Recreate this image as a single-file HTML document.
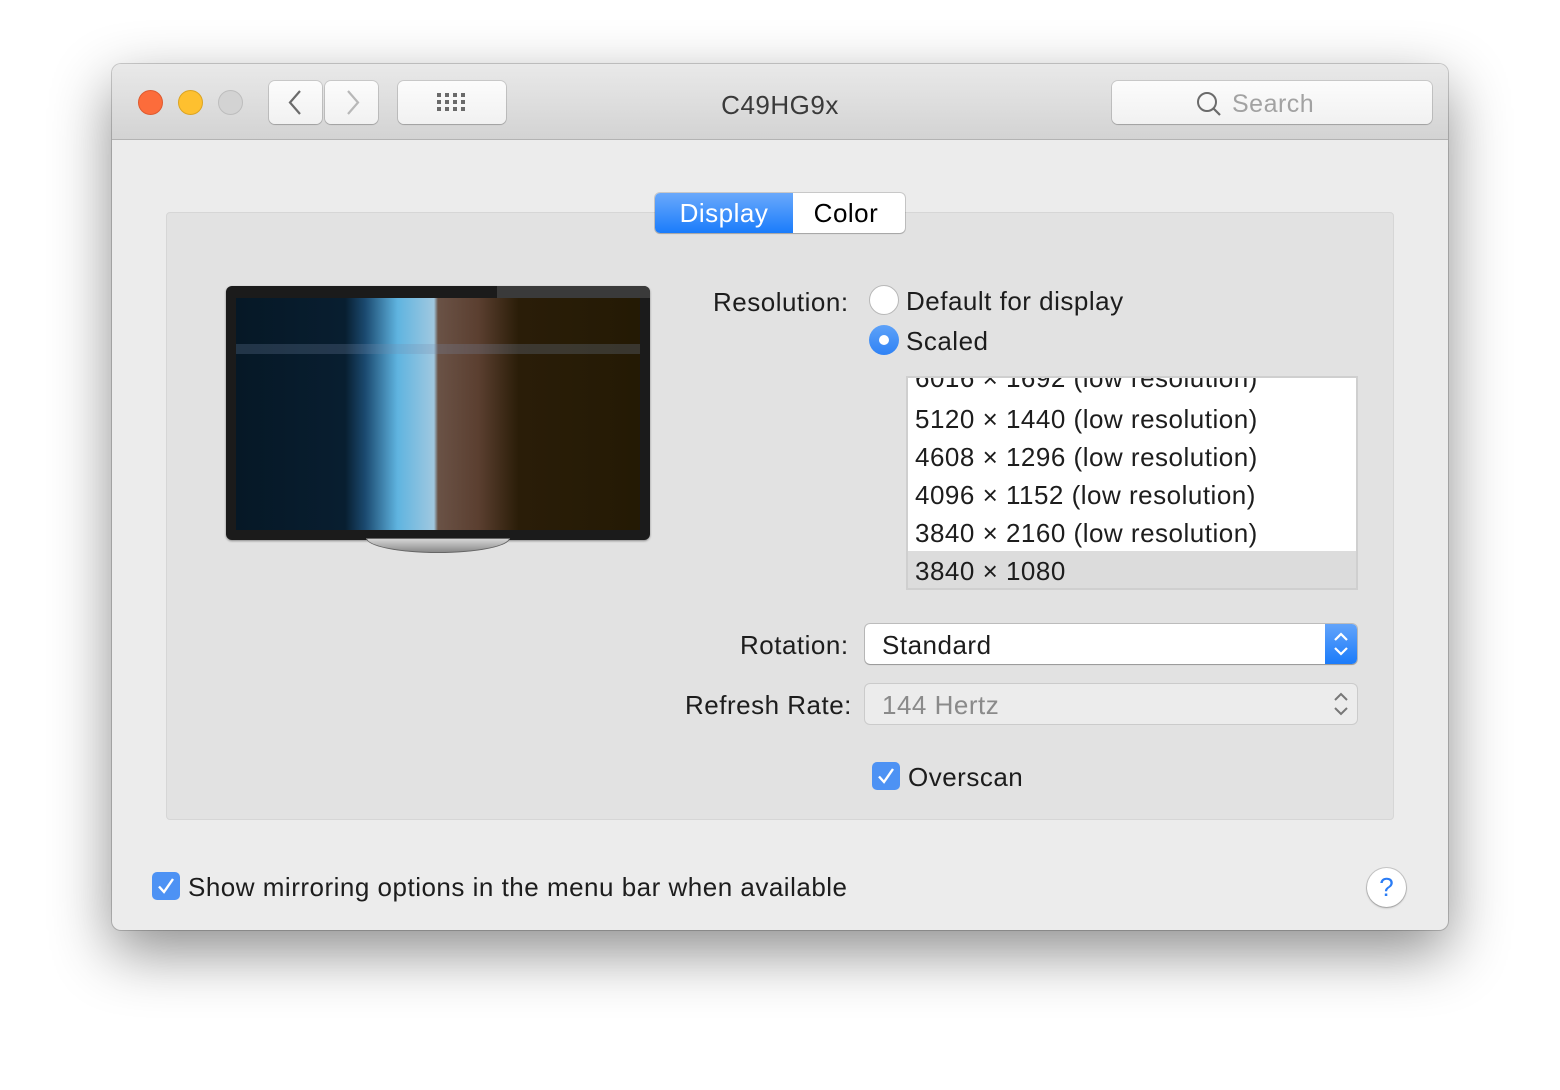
<!DOCTYPE html>
<html><head><meta charset="utf-8"><style>
*{box-sizing:border-box;margin:0;padding:0}
body{width:1560px;height:1090px;background:#fff;position:relative;overflow:hidden;font-family:"Liberation Sans",sans-serif;color:#1d1d1d}
.abs{position:absolute}
.win{left:112px;top:64px;width:1336px;height:866px;border-radius:9px;background:#ececec;box-shadow:0 22px 60px rgba(0,0,0,.45),0 0 0 1px rgba(0,0,0,.18);overflow:hidden}
.title{left:0;top:0;width:1336px;height:76px;background:linear-gradient(#e9e9e9,#d3d3d3);border-bottom:1px solid #b3b3b3}
.dot{width:25px;height:25px;border-radius:50%;top:26px}
.btn{background:linear-gradient(#fcfcfc,#f1f1f1);border-radius:6px;box-shadow:0 0 0 1px rgba(0,0,0,.12),0 1px 1px rgba(0,0,0,.15)}
.t{font-size:26px;white-space:nowrap;line-height:1;letter-spacing:0.5px}
</style></head><body>
<div class="abs win">
 <div class="abs title">
  <div class="abs dot" style="left:26px;background:#fc6c3b;border:1px solid #de5a2f"></div>
  <div class="abs dot" style="left:66px;background:#fec02f;border:1px solid #dca422"></div>
  <div class="abs dot" style="left:106px;background:#d3d3d3;border:1px solid #bdbdbd"></div>
  <div class="abs btn" style="left:157px;top:17px;width:53px;height:43px"></div>
  <div class="abs btn" style="left:213px;top:17px;width:53px;height:43px"></div>
  <svg class="abs" style="left:157px;top:17px" width="110" height="43"><path d="M31 10 L21 21.5 L31 33" stroke="#6b6b6b" stroke-width="2.2" fill="none"/><path d="M79 10 L89 21.5 L79 33" stroke="#b8b8b8" stroke-width="2.2" fill="none"/></svg>
  <div class="abs btn" style="left:286px;top:17px;width:108px;height:43px"></div>
  <svg class="abs" style="left:325px;top:29px" width="30" height="20"><g fill="#6a6a6a">
   <rect x="0" y="0" width="4" height="4"/><rect x="8" y="0" width="4" height="4"/><rect x="16" y="0" width="4" height="4"/><rect x="24" y="0" width="4" height="4"/>
   <rect x="0" y="7" width="4" height="4"/><rect x="8" y="7" width="4" height="4"/><rect x="16" y="7" width="4" height="4"/><rect x="24" y="7" width="4" height="4"/>
   <rect x="0" y="14" width="4" height="4"/><rect x="8" y="14" width="4" height="4"/><rect x="16" y="14" width="4" height="4"/><rect x="24" y="14" width="4" height="4"/></g></svg>
  <div class="abs t" style="left:0;width:1336px;text-align:center;top:28px;color:#3a3a3a;font-size:26px">C49HG9x</div>
  <div class="abs btn" style="left:1000px;top:17px;width:320px;height:43px"></div>
  <svg class="abs" style="left:1084px;top:27px" width="28" height="28"><circle cx="11" cy="11" r="9" stroke="#6b6b6b" stroke-width="2" fill="none"/><path d="M17.5 17.5 L24 24" stroke="#6b6b6b" stroke-width="2.2"/></svg>
  <div class="abs t" style="left:1120px;top:28px;color:#a2a2a2;font-size:25px">Search</div>
 </div>
 <div class="abs" style="left:54px;top:148px;width:1228px;height:608px;background:#e2e2e2;border:1px solid #d6d6d6;border-radius:4px"></div>
 <div class="abs" style="left:543px;top:129px;width:250px;height:40px;border-radius:5px;background:#fff;box-shadow:0 0 0 1px rgba(0,0,0,.15),0 1px 1px rgba(0,0,0,.15);overflow:hidden">
  <div class="abs" style="left:0;top:0;width:138px;height:40px;background:linear-gradient(#6aa9fb,#1a7cfb)"></div>
  <div class="abs t" style="left:0;width:138px;text-align:center;top:7px;color:#fff">Display</div>
  <div class="abs t" style="left:138px;width:106px;text-align:center;top:7px;color:#000">Color</div>
 </div>
 <!-- monitor -->
 <div class="abs" style="left:114px;top:222px;width:424px;height:254px;background:#1b1b1b;border-radius:6px;box-shadow:0 1px 2px rgba(0,0,0,.4)"></div>
 <div class="abs" style="left:385px;top:222px;width:153px;height:12px;background:#3a3a3a;border-top-right-radius:6px"></div>
 <div class="abs" style="left:124px;top:234px;width:404px;height:232px;background:linear-gradient(90deg,#061826 0%,#081e30 27%,#1b4a70 32%,#5fb4e0 40%,#a0c8e0 49%,#6a5246 50%,#5b3f30 60%,#2a1d08 70%,#241a04 100%)"></div>
 <div class="abs" style="left:124px;top:280px;width:404px;height:10px;background:rgba(120,140,170,.25)"></div>
 <div class="abs" style="left:254px;top:474px;width:144px;height:15px;border-radius:0 0 72px 72px/0 0 15px 15px;background:linear-gradient(#d5d5d5,#8a8a8a);border:1px solid #666"></div>
 <!-- labels -->
 <div class="abs t" style="left:601px;top:225px">Resolution:</div>
 <div class="abs" style="left:757px;top:221px;width:30px;height:30px;border-radius:50%;background:#fff;border:1px solid #b8b8b8"></div>
 <div class="abs t" style="left:794px;top:224px">Default for display</div>
 <div class="abs" style="left:757px;top:261px;width:30px;height:30px;border-radius:50%;background:linear-gradient(#5ea2f8,#2f82f5)"></div>
 <div class="abs" style="left:767px;top:271px;width:10px;height:10px;border-radius:50%;background:#fff"></div>
 <div class="abs t" style="left:794px;top:264px">Scaled</div>
 <div class="abs" style="left:794px;top:312px;width:452px;height:214px;background:#fff;border:2px solid #cfcfcf;overflow:hidden">
  <div class="abs t" style="left:7px;top:-13px">6016 × 1692 (low resolution)</div>
  <div class="abs t" style="left:7px;top:28px">5120 × 1440 (low resolution)</div>
  <div class="abs t" style="left:7px;top:66px">4608 × 1296 (low resolution)</div>
  <div class="abs t" style="left:7px;top:104px">4096 × 1152 (low resolution)</div>
  <div class="abs t" style="left:7px;top:142px">3840 × 2160 (low resolution)</div>
  <div class="abs" style="left:0;top:173px;width:450px;height:38px;background:#dcdcdc"></div>
  <div class="abs t" style="left:7px;top:180px">3840 × 1080</div>
 </div>
 <div class="abs t" style="left:628px;top:568px">Rotation:</div>
 <div class="abs" style="left:753px;top:560px;width:492px;height:40px;border-radius:5px;background:#fff;box-shadow:0 0 0 1px rgba(0,0,0,.17),0 1px 1px rgba(0,0,0,.2);overflow:hidden">
  <div class="abs" style="right:0;top:0;width:32px;height:40px;background:linear-gradient(#62a4fa,#1b7cfa)"></div>
  <svg class="abs" style="right:0;top:0" width="32" height="40"><path d="M10 16 L16 10 L22 16 M10 24 L16 30 L22 24" stroke="#fff" stroke-width="2.2" fill="none"/></svg>
 </div>
 <div class="abs t" style="left:770px;top:568px">Standard</div>
 <div class="abs t" style="left:573px;top:628px">Refresh Rate:</div>
 <div class="abs" style="left:753px;top:620px;width:492px;height:40px;border-radius:5px;background:#ececec;box-shadow:0 0 0 1px rgba(0,0,0,.1)">
  <svg class="abs" style="right:0;top:0" width="32" height="40"><path d="M10 16 L16 10 L22 16 M10 24 L16 30 L22 24" stroke="#777" stroke-width="2" fill="none"/></svg>
 </div>
 <div class="abs t" style="left:770px;top:628px;color:#8a8a8a">144 Hertz</div>
 <div class="abs" style="left:760px;top:698px;width:28px;height:28px;border-radius:5px;background:#4d92f4"></div>
 <svg class="abs" style="left:760px;top:698px" width="28" height="28"><path d="M7 14.5 L12 20 L21 7" stroke="#fff" stroke-width="2.4" fill="none"/></svg>
 <div class="abs t" style="left:796px;top:700px">Overscan</div>
 <div class="abs" style="left:40px;top:808px;width:28px;height:28px;border-radius:5px;background:#4d92f4"></div>
 <svg class="abs" style="left:40px;top:808px" width="28" height="28"><path d="M7 14.5 L12 20 L21 7" stroke="#fff" stroke-width="2.4" fill="none"/></svg>
 <div class="abs t" style="left:76px;top:810px">Show mirroring options in the menu bar when available</div>
 <div class="abs" style="left:1255px;top:804px;width:39px;height:39px;border-radius:50%;background:#fff;box-shadow:0 0 0 1px rgba(0,0,0,.15),0 1px 2px rgba(0,0,0,.25);color:#2a7cf5;font-size:26px;text-align:center;line-height:39px">?</div>
</div>
</body></html>
